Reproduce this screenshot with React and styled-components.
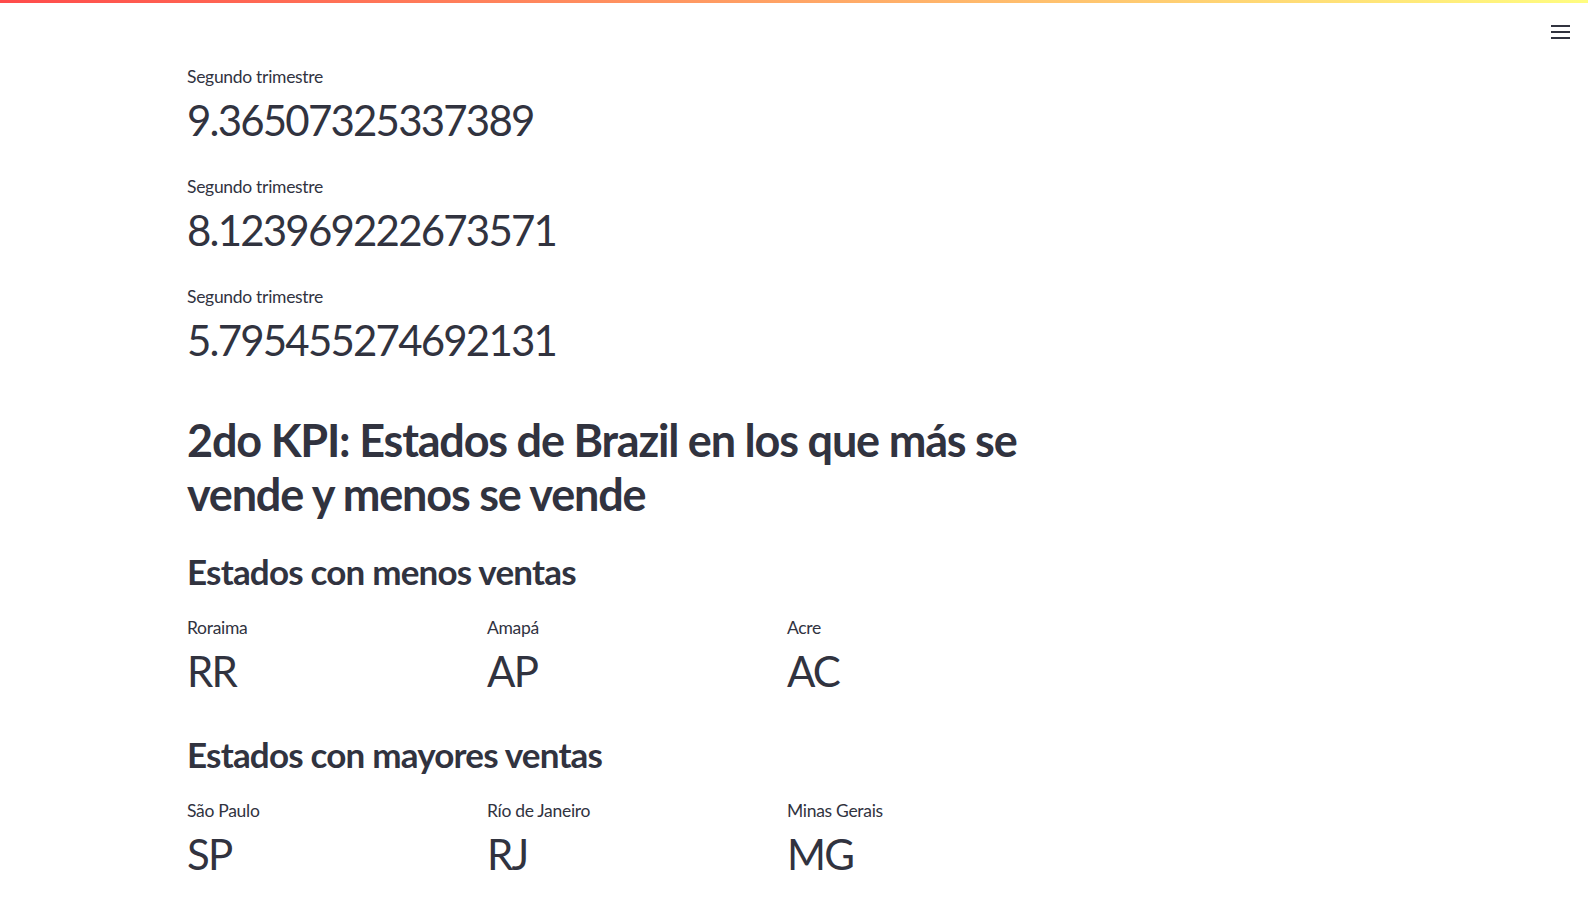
import React from "react";
import styled, { createGlobalStyle } from "styled-components";

const GlobalStyle = createGlobalStyle`
  body {
    margin: 0;
    background: #ffffff;
    color: rgb(49, 51, 63);
    font-family: "Source Sans Pro", Lato, "Noto Sans", sans-serif;
  }
`;

const Decoration = styled.div`
  height: 3px;
  background-image: linear-gradient(90deg, rgb(255, 75, 75), rgb(255, 253, 128));
`;

const Toolbar = styled.div`
  height: 58px;
  display: flex;
  justify-content: flex-end;
  align-items: center;
  padding-right: 18px;
`;

const MenuButton = styled.button`
  border: none;
  background: transparent;
  padding: 0;
  width: 19px;
  height: 19px;
  display: flex;
  align-items: center;
  justify-content: center;
  color: rgb(49, 51, 63);
  cursor: pointer;
`;

const Main = styled.main`
  width: 880px;
  margin-left: 187px;
  display: flex;
  flex-direction: column;
  gap: 20px;
  padding-bottom: 40px;
`;

const Metric = styled.div`
  display: flex;
  flex-direction: column;
`;

const MetricLabel = styled.div`
  height: 30px;
  display: flex;
  align-items: center;
  font-size: 17.5px;
  letter-spacing: -0.3px;
`;

const MetricValue = styled.div`
  height: 60px;
  display: flex;
  align-items: center;
  padding-bottom: 3px;
  box-sizing: border-box;
  font-size: 42px;
  letter-spacing: -1.8px;
`;

const Heading = styled.h2`
  margin: 0;
  padding-top: 22px;
  font-size: 45px;
  line-height: 54px;
  font-weight: 700;
  letter-spacing: -1.2px;
`;

const SubHeading = styled.h3`
  margin: 0;
  padding-top: ${(p) => (p.$first ? "9px" : "11px")};
  font-size: 35px;
  line-height: 42px;
  font-weight: 700;
  letter-spacing: -0.8px;
`;

const Columns = styled.div`
  display: grid;
  grid-template-columns: repeat(3, 1fr);
  gap: 20px;
`;

const quarters = ["9.36507325337389", "8.123969222673571", "5.795455274692131"];

const lowest = [
  { name: "Roraima", code: "RR" },
  { name: "Amapá", code: "AP" },
  { name: "Acre", code: "AC" },
];

const highest = [
  { name: "São Paulo", code: "SP" },
  { name: "Río de Janeiro", code: "RJ" },
  { name: "Minas Gerais", code: "MG" },
];

const StateRow = ({ states }) => (
  <Columns>
    {states.map((s) => (
      <Metric key={s.code}>
        <MetricLabel>{s.name}</MetricLabel>
        <MetricValue>{s.code}</MetricValue>
      </Metric>
    ))}
  </Columns>
);

export default function App() {
  return (
    <>
      <GlobalStyle />
      <Decoration />
      <Toolbar>
        <MenuButton aria-label="Menu">
          <svg width="19" height="14" viewBox="0 0 19 14">
            <rect x="0" y="0" width="19" height="2" fill="currentColor" />
            <rect x="0" y="6" width="19" height="2" fill="currentColor" />
            <rect x="0" y="12" width="19" height="2" fill="currentColor" />
          </svg>
        </MenuButton>
      </Toolbar>
      <Main>
        {quarters.map((q, i) => (
          <Metric key={i}>
            <MetricLabel>Segundo trimestre</MetricLabel>
            <MetricValue>{q}</MetricValue>
          </Metric>
        ))}
        <Heading>2do KPI: Estados de Brazil en los que más se vende y menos se vende</Heading>
        <SubHeading $first>Estados con menos ventas</SubHeading>
        <StateRow states={lowest} />
        <SubHeading>Estados con mayores ventas</SubHeading>
        <StateRow states={highest} />
      </Main>
    </>
  );
}
